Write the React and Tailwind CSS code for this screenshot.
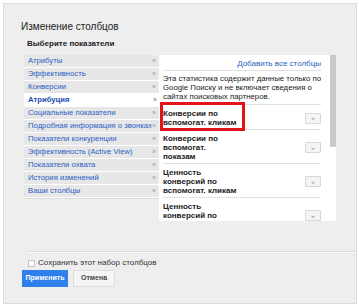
import React from 'react';

const metrics = [
  "Атрибуты",
  "Эффективность",
  "Конверсии",
  "Атрибуция",
  "Социальные показатели",
  "Подробная информация о звонках",
  "Показатели конкуренции",
  "Эффективность (Active View)",
  "Показатели охвата",
  "История изменений",
  "Ваши столбцы",
];

const columns = [
  ["Конверсии по", "вспомогат. кликам"],
  ["Конверсии по", "вспомогат.", "показам"],
  ["Ценность", "конверсий по", "вспомогат. кликам"],
  ["Ценность", "конверсий по", "вспомогат. показам"],
];

const AddButton = () => (
  <div className="w-[16px] h-[11px] shrink-0 rounded-[1px] border border-[#d8d8d8] bg-[#f4f4f4] flex items-center justify-center text-[6px] leading-none text-[#888]">
    »
  </div>
);

export default function App() {
  return (
    <div className="w-[359px] h-[308px] bg-white p-[3px] pr-[2px]" style={{ fontFamily: '"Liberation Sans", Arial, sans-serif' }}>
      <div className="h-[301px] border border-[#dcdcdc] bg-[#eeeeee] flex flex-col">
        <div className="pl-[17px] pt-[17px] text-[10px] leading-[12px] text-[#222]">Изменение столбцов</div>
        <div className="pl-[23px] pt-[6px] text-[8px] leading-[10px] font-bold text-[#222]">Выберите показатели</div>

        <div className="flex pl-[20px] pt-[6px]">
          {/* левый список категорий */}
          <div className="w-[135px] self-start border-b border-[#dcdcdc]">
            {metrics.map((m) => {
              const active = m === "Атрибуция";
              return (
                <div
                  key={m}
                  className={`h-[13px] flex items-center border-b border-white pl-[4px] pr-[3px] text-[7.7px] whitespace-nowrap ${active ? 'bg-white font-bold text-[#1d4fae] -mr-[1px]' : 'bg-[#e7e7e7] text-[#2a5fc4]'}`}
                >
                  <span className="flex-1 min-w-0 overflow-hidden">{m}</span>
                  <span className="shrink-0 text-[#999] text-[7px]">»</span>
                </div>
              );
            })}
          </div>

          {/* правая панель со столбцами */}
          <div className="relative w-[177px] h-[166px] bg-white flex overflow-hidden">
            <div className="flex-1 pl-[4px] pr-[9px] overflow-hidden">
              <div className="pt-[4px] pb-[2px] text-right text-[8px] leading-[9px] text-[#2a5fc4] border-b border-[#e2e2e2]">
                Добавить все столбцы
              </div>
              <div className="pt-[3px] pb-[3px] text-[7.8px] leading-[9px] text-[#222] border-b border-[#e2e2e2] whitespace-nowrap">
                Эта статистика содержит данные только по<br />
                Google Поиску и не включает сведения о<br />
                сайтах поисковых партнеров.
              </div>
              {columns.map((lines, i) => (
                <div key={i} className="pt-[4px] pb-[2px] flex items-center justify-between border-b border-[#e2e2e2]">
                  <div className="text-[8px] leading-[9px] font-bold text-[#222]">
                    {lines.map((l) => (
                      <div key={l}>{l}</div>
                    ))}
                  </div>
                  <AddButton />
                </div>
              ))}
            </div>
            <div className="w-[6px] shrink-0">
              <div className="h-[92px] bg-[#c9c9c9]"></div>
            </div>
            {/* выделение */}
            <div className="absolute left-[1px] top-[47px] w-[85px] h-[29px] border-[3px] border-[#e3121b]"></div>
          </div>
        </div>

        <div className="mt-[30px] ml-[23px] border-t border-[#dcdcdc] shadow-[0_1px_0_#f8f8f8]"></div>
        <div className="flex items-center gap-[3px] pl-[24px] pt-[7px] text-[8px] leading-[8px] text-[#333]">
          <div className="w-[7px] h-[7px] bg-white border border-[#c4c4c4]"></div>
          <span>Сохранить этот набор столбцов</span>
        </div>
        <div className="flex gap-[5px] pl-[18px] pt-[3px]">
          <div className="w-[46px] h-[17px] bg-[#2f80ed] text-white text-[7px] font-bold flex items-center justify-center">Применить</div>
          <div className="w-[42px] h-[17px] bg-[#f5f5f5] border border-[#dedede] text-[#444] text-[7px] font-bold flex items-center justify-center">Отмена</div>
        </div>
      </div>
    </div>
  );
}
